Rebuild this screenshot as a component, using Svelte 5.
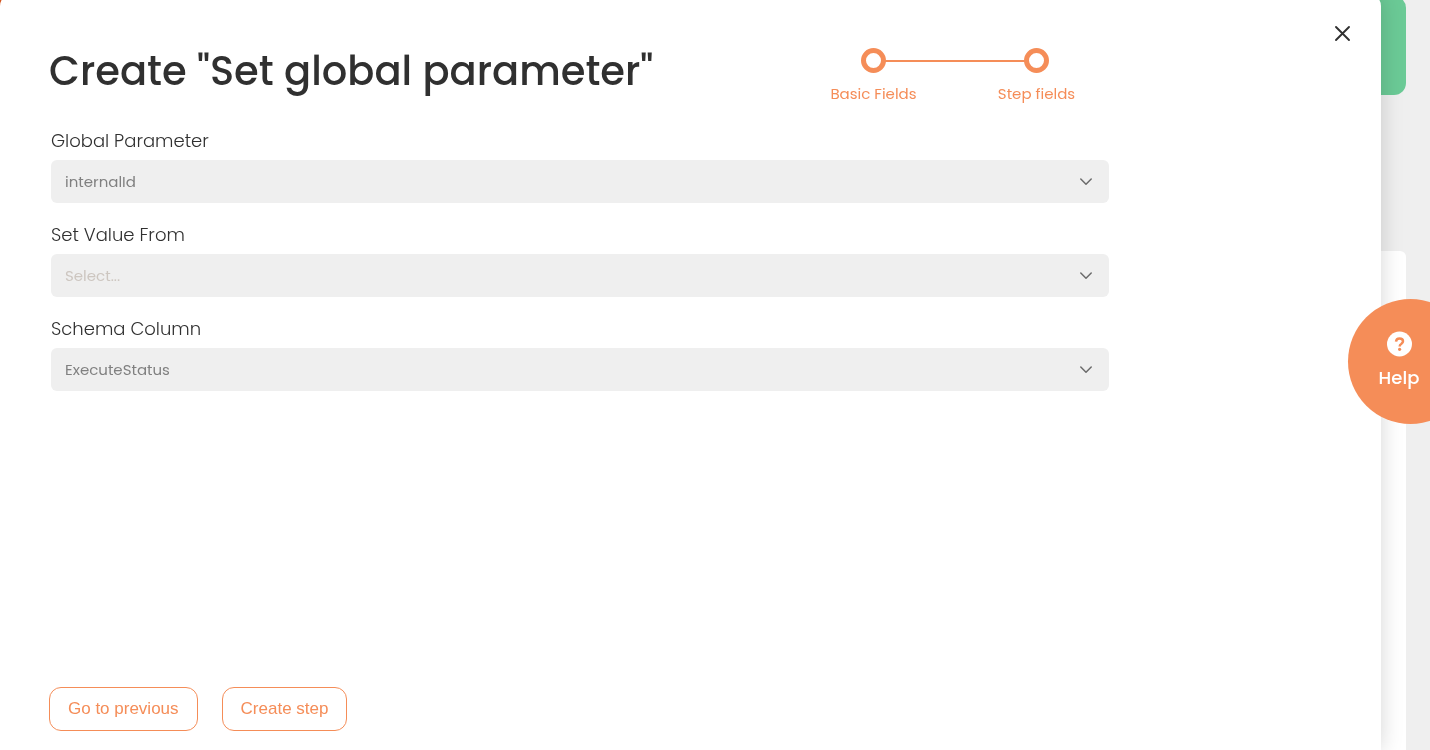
<script>
  const steps = ['Basic Fields', 'Step fields'];

  let fields = $state([
    { id: 'global-parameter', label: 'Global Parameter', value: 'internalId', options: ['internalId'] },
    { id: 'set-value-from', label: 'Set Value From', value: '', options: [] },
    { id: 'schema-column', label: 'Schema Column', value: 'ExecuteStatus', options: ['ExecuteStatus'] }
  ]);
</script>

<div class="page">
  <div class="banner"></div>
  <div class="panel"></div>
</div>
<div class="accent"></div>

<div class="drawer" role="dialog" aria-labelledby="drawer-title">
  <button class="close" type="button" aria-label="Close">
    <svg width="17" height="17" viewBox="0 0 17 17" fill="none" stroke="currentColor" stroke-width="1.9" stroke-linecap="round">
      <path d="M2 2 15 15M15 2 2 15" />
    </svg>
  </button>

  <header>
    <h1 id="drawer-title">Create "Set global parameter"</h1>
    <ol class="steps">
      {#each steps as step}
        <li><span class="dot"></span><span>{step}</span></li>
      {/each}
    </ol>
  </header>

  <form onsubmit={(e) => e.preventDefault()}>
    <div class="fields">
      {#each fields as field}
        <div class="field">
          <label for={field.id}>{field.label}</label>
          <div class="control">
            <select id={field.id} bind:value={field.value} class:empty={!field.value}>
              {#if !field.value}<option value="">Select...</option>{/if}
              {#each field.options as option}
                <option value={option}>{option}</option>
              {/each}
            </select>
            <svg width="14" height="8" viewBox="0 0 14 8" fill="none" stroke="currentColor" stroke-width="1.5" stroke-linecap="round" stroke-linejoin="round" aria-hidden="true">
              <path d="M1.8 1 7 6.2 12.2 1" />
            </svg>
          </div>
        </div>
      {/each}
    </div>
    <footer>
      <button type="button">Go to previous</button>
      <button type="submit">Create step</button>
    </footer>
  </form>
</div>

<button class="help" type="button">
  <svg width="26" height="26" viewBox="0 0 26 26" aria-hidden="true">
    <circle cx="13.5" cy="13" r="12.5" fill="#fff" />
    <path d="M10 10.6C10.2 8.6 11.6 7.5 13.5 7.5c2.1 0 3.5 1.1 3.5 2.8 0 1.3-.7 2-1.8 2.7-1.1.6-1.5 1.1-1.5 2.4" fill="none" stroke="#f58d58" stroke-width="2.5" />
    <circle cx="13.6" cy="18.3" r="1.6" fill="#f58d58" />
  </svg>
  <span>Help</span>
</button>

<style>
  :global(body) {
    margin: 0;
    background: #efefef;
    color: #303030;
    font-family: Poppins, Inter, sans-serif;
    overflow: hidden;
  }

  .page {
    display: flex;
    flex-direction: column;
    gap: 156px;
    height: 100vh;
    padding-right: 24px;
    box-sizing: border-box;
  }

  .banner {
    flex: none;
    height: 99px;
    margin-top: -4px;
    background: #6bca96;
    border-radius: 12px;
  }

  .panel {
    flex: 1;
    background: #fff;
    border-radius: 6px 6px 0 0;
  }

  .accent {
    position: fixed;
    top: 0;
    left: 0;
    width: 12px;
    height: 12px;
    background: #e0581f;
  }

  .drawer {
    position: fixed;
    inset: -6px 49px 0 0;
    display: flex;
    flex-direction: column;
    box-sizing: border-box;
    padding: 54px 263px 19px 49px;
    background: #fff;
    border-radius: 12px 12px 0 0;
    box-shadow: 0 0 22px rgba(0, 0, 0, 0.17);
  }

  button {
    cursor: pointer;
  }

  .close {
    position: absolute;
    top: 31px;
    right: 30px;
    display: flex;
    padding: 0;
    border: 0;
    background: none;
    color: #303030;
  }

  header {
    display: flex;
    justify-content: space-between;
    align-items: flex-start;
  }

  h1 {
    margin: 0;
    font-size: 40px;
    line-height: 46px;
    font-weight: 500;
    white-space: nowrap;
  }

  .steps {
    display: flex;
    margin: 0;
    padding: 0;
    list-style: none;
    color: #f58d58;
    font-size: 15px;
    line-height: 20px;
  }

  .steps li {
    position: relative;
    display: flex;
    flex-direction: column;
    align-items: center;
    gap: 11px;
    width: 163px;
  }

  .steps li + li::before {
    content: '';
    position: absolute;
    top: 12px;
    right: 50%;
    width: 100%;
    height: 2px;
    background: #f58d58;
  }

  .dot {
    position: relative;
    z-index: 1;
    box-sizing: border-box;
    width: 25px;
    height: 25px;
    border: 5px solid #f58d58;
    border-radius: 50%;
    background: #fff;
  }

  form {
    flex: 1;
    display: flex;
    flex-direction: column;
    justify-content: space-between;
    margin-top: 26px;
  }

  .fields {
    display: flex;
    flex-direction: column;
    gap: 21px;
    padding: 0 9px 0 2px;
  }

  .field {
    display: flex;
    flex-direction: column;
    gap: 8px;
  }

  label {
    font-size: 18px;
    line-height: 22px;
    font-weight: 300;
  }

  .control {
    display: grid;
    align-items: center;
  }

  .control > * {
    grid-area: 1 / 1;
  }

  .control svg {
    justify-self: end;
    margin-right: 16px;
    color: #6b6b6b;
    pointer-events: none;
  }

  select {
    appearance: none;
    width: 100%;
    height: 43px;
    padding: 0 40px 0 14px;
    border: 0;
    border-radius: 6px;
    background: #efefef;
    color: #808080;
    font-family: inherit;
    font-size: 15px;
  }

  select.empty {
    color: #cdc6c0;
  }

  footer {
    display: flex;
    gap: 24px;
  }

  footer button {
    height: 44px;
    padding: 0 18px;
    border: 1px solid #f58d58;
    border-radius: 12px;
    background: #fff;
    color: #f58d58;
    font-family: 'Liberation Sans', Arial, sans-serif;
    font-size: 17px;
  }

  .help {
    position: fixed;
    top: 299px;
    right: -43px;
    display: flex;
    flex-direction: column;
    align-items: center;
    justify-content: center;
    gap: 10px;
    width: 125px;
    height: 125px;
    padding: 0 23px 4px 0;
    border: 0;
    border-radius: 50%;
    background: #f58d58;
    color: #fff;
    font-family: inherit;
    font-size: 18px;
    line-height: 22px;
    font-weight: 500;
  }
</style>
